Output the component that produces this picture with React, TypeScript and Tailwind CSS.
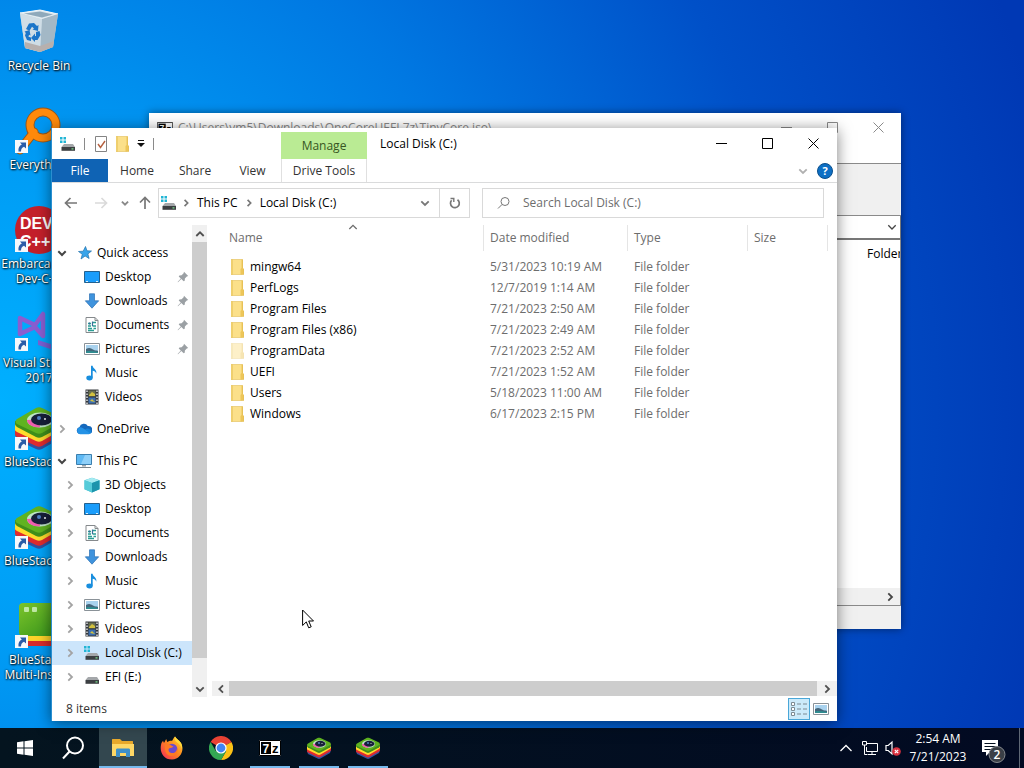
import type { ReactNode } from 'react';

type IconName =
  | 'star' | 'desktop' | 'download' | 'document' | 'picture' | 'music' | 'video'
  | 'cloud' | 'pc' | 'cube' | 'disk' | 'drive';

interface TreeItem {
  label: string;
  icon: IconName;
  level: 0 | 1;
  state?: 'open' | 'closed';
  pinned?: boolean;
  selected?: boolean;
}

const treeGroups: TreeItem[][] = [
  [
    { label: 'Quick access', icon: 'star', level: 0, state: 'open' },
    { label: 'Desktop', icon: 'desktop', level: 1, pinned: true },
    { label: 'Downloads', icon: 'download', level: 1, pinned: true },
    { label: 'Documents', icon: 'document', level: 1, pinned: true },
    { label: 'Pictures', icon: 'picture', level: 1, pinned: true },
    { label: 'Music', icon: 'music', level: 1 },
    { label: 'Videos', icon: 'video', level: 1 },
  ],
  [{ label: 'OneDrive', icon: 'cloud', level: 0, state: 'closed' }],
  [
    { label: 'This PC', icon: 'pc', level: 0, state: 'open' },
    { label: '3D Objects', icon: 'cube', level: 1, state: 'closed' },
    { label: 'Desktop', icon: 'desktop', level: 1, state: 'closed' },
    { label: 'Documents', icon: 'document', level: 1, state: 'closed' },
    { label: 'Downloads', icon: 'download', level: 1, state: 'closed' },
    { label: 'Music', icon: 'music', level: 1, state: 'closed' },
    { label: 'Pictures', icon: 'picture', level: 1, state: 'closed' },
    { label: 'Videos', icon: 'video', level: 1, state: 'closed' },
    { label: 'Local Disk (C:)', icon: 'disk', level: 1, state: 'closed', selected: true },
    { label: 'EFI (E:)', icon: 'drive', level: 1, state: 'closed' },
  ],
];

const files = [
  { name: 'mingw64', date: '5/31/2023 10:19 AM' },
  { name: 'PerfLogs', date: '12/7/2019 1:14 AM' },
  { name: 'Program Files', date: '7/21/2023 2:50 AM' },
  { name: 'Program Files (x86)', date: '7/21/2023 2:49 AM' },
  { name: 'ProgramData', date: '7/21/2023 2:52 AM', hidden: true },
  { name: 'UEFI', date: '7/21/2023 1:52 AM' },
  { name: 'Users', date: '5/18/2023 11:00 AM' },
  { name: 'Windows', date: '6/17/2023 2:15 PM' },
];

interface ChevronProps {
  dir: 'up' | 'down' | 'left' | 'right';
  size?: string;
  stroke?: number;
  className?: string;
}

function Chevron({ dir, size = 'size-3', stroke = 1.8, className = '' }: ChevronProps) {
  const paths = {
    up: 'M2.300 8L6 4.300 9.700 8',
    down: 'M2.300 4.300L6 8l3.700-3.700',
    left: 'M8 2.300L4.300 6 8 9.700',
    right: 'M4.300 2.300L8 6 4.300 9.700',
  };
  return (
    <svg viewBox="0 0 12 12" className={`${size} shrink-0 ${className}`} fill="none" stroke="currentColor" strokeWidth={stroke}>
      <path d={paths[dir]} />
    </svg>
  );
}

function FolderIcon({ faded }: { faded?: boolean }) {
  return (
    <svg viewBox="0 0 16 16" className={`size-4 shrink-0 ${faded ? 'opacity-45' : ''}`}>
      <path d="M1 .5h11v15H1z" fill="#fbe08a" />
      <path d="M1 .5h2v15H1z" fill="#efcf6e" />
      <path d="M11.500 .5H13v8.500l1 1v5.500h-3.500V10l1-1z" fill="#edc659" />
      <path d="M1 .5h11.500V9M1 15.500h12.500V10" fill="none" stroke="#e2bd55" strokeWidth=".6" />
    </svg>
  );
}

function DriveShape() {
  return (
    <>
      <path d="M4 8h9l2 3H1.500z" fill="#a4a7aa" />
      <path d="M1.500 11H15v3.800H1.500z" fill="#3c3f42" />
      <path d="M11.500 12.300h2v1.200h-2z" fill="#7be08e" />
    </>
  );
}

function SmallIcon({ name }: { name: IconName }) {
  const shapes: Record<IconName, ReactNode> = {
    star: (
      <path d="M9.500 1.500l1.500 4.300 4.500.2-3.600 2.900 1.200 4.600-4-2.500L5 14l1.300-4.700L2.500 6.500l4.700-.3z" fill="#38a4ea" stroke="#2273ad" strokeWidth=".7" />
    ),
    desktop: (
      <>
        <path d="M.5 2.500h15v11H.5z" fill="#1a9dfb" stroke="#24618f" />
        <path d="M2 12.500h2m8 0h2" stroke="#d7efff" />
      </>
    ),
    download: <path d="M5.500 .8h5v7h4.200L8 15.200 1.300 7.800h4.200z" fill="#3f93dd" stroke="#2b70b3" strokeWidth=".7" />,
    document: (
      <>
        <path d="M2 .5h9L14 3.500v12H2z" fill="#fff" stroke="#85898c" />
        <path d="M11 .5v3h3" fill="none" stroke="#85898c" />
        <path d="M4 6.500h3m2-1h3M4 9h3m1.500 0H12M4 11.500h4m1.500 0H12M4 13.500h6" stroke="#2a9d94" strokeWidth="1.300" />
        <path d="M8.500 4.500v4.500M5.500 5.500v2" stroke="#3c6f99" strokeWidth="1.200" />
      </>
    ),
    picture: (
      <>
        <path d="M.5 2.500h15v11H.5z" fill="#fff" stroke="#8a9298" />
        <path d="M2 4h12v8H2z" fill="#a9d2ee" />
        <path d="M2 8c3-2 5-1 7 .5s4 .5 5 1.500v2H2z" fill="#44657a" />
        <path d="M2 10.500c4-1 8 0 12 .5v1H2z" fill="#2f8d91" />
      </>
    ),
    music: (
      <>
        <ellipse cx="5.500" cy="13" rx="3.200" ry="2.400" fill="#188ede" />
        <path d="M7 .8h1.600c.3 3 4.800 3.800 3.600 8-.6-2.300-2-2.700-3.500-3v7H7z" fill="#188ede" />
      </>
    ),
    video: (
      <>
        <path d="M1.500 .5h13v15h-13z" fill="#33373b" />
        <path d="M4.500 1.500h7v6h-7z" fill="#6a7050" />
        <path d="M4.500 8.500h7v6h-7z" fill="#3c6fb0" />
        <path d="M5 6l3-3 3 2v2H5zM6 12l2-2 3 3" fill="#d2c13f" />
        <path d="M3 1.500v14M13 1.500v14" stroke="#e7e9ea" strokeWidth="1.400" strokeDasharray="1.500 1.500" />
      </>
    ),
    cloud: (
      <>
        <path d="M4 13a3.500 3.500 0 01-.5-6.900A4.500 4.500 0 0111.800 5 3.800 3.800 0 0113 13z" fill="#1669bd" />
        <path d="M4 13.300a3.600 3.600 0 010-7c2 0 3.500 1.200 5 2.200l5.500 3a2.800 2.800 0 01-1.500 1.800z" fill="#2492e6" />
        <path d="M9 8.500a4 4 0 016.500 2.500 2.500 2.500 0 01-1 1.500z" fill="#1784da" />
      </>
    ),
    pc: (
      <>
        <path d="M.5 1.500h15v10H.5z" fill="#5eb9f4" stroke="#3b7fae" />
        <path d="M9 2h6v9H5z" fill="#8fd0f9" />
        <path d="M6 12h4v1.500H6z" fill="#9aa3a9" />
        <path d="M1 14.500h14" stroke="#7c868c" />
      </>
    ),
    cube: (
      <>
        <path d="M8 .8l7.500 2.500v9L8 15.500.5 12.300v-9z" fill="#38bccd" />
        <path d="M8 .8l7.500 2.500L8 6 .5 3.300z" fill="#a5eaf1" />
        <path d="M8 6l7.500-2.700v9L8 15.500z" fill="#1d94ac" />
        <path d="M.5 3.300L8 6v9.500L.5 12.300z" fill="#55cbd9" />
      </>
    ),
    disk: (
      <>
        <DriveShape />
        <path d="M0 1h2.500v2.500H0zM3.500 1H6v2.500H3.500zM0 4.500h2.500V7H0zM3.500 4.500H6V7H3.500z" fill="#21b5d5" />
      </>
    ),
    drive: <DriveShape />,
  };
  return <svg viewBox="0 0 16 16" className="size-4 shrink-0">{shapes[name]}</svg>;
}

function PinIcon() {
  return (
    <svg viewBox="0 0 12 12" className="size-3 shrink-0">
      <path d="M7 .8L11.200 5l-1.400.5-1.900 2-.2 2.200-1 .6L4.300 8 1 11.300l-.4-.4L3.800 7.500 1.700 5.400l.7-1 2.200-.2 2-2z" fill="#9ba0a4" />
    </svg>
  );
}

function BlueStacksIcon({ className }: { className: string }) {
  return (
    <svg viewBox="0 0 48 48" className={className}>
      <path d="M0 30l24-8 24 6-2 6-19 11c-2 1-4 1-6 0L2 36z" fill="#34519f" />
      <path d="M0 25l24-6 24 3v6c0 1-1 2-2 3L27 42c-2 1-4 1-6 0L2 33c-1-1-2-1-2-2z" fill="#e02b2e" />
      <path d="M0 20l24-6 24 3v6c0 1-1 2-2 3L27 37c-2 1-4 1-6 0L2 28c-1-1-2-1-2-2z" fill="#ffdc2d" />
      <path d="M0 17h48v3c0 1-1 2-2 3L27 33c-2 1-4 1-6 0L2 23c-1-1-2-2-2-3z" fill="#3f8f1b" />
      <path d="M2 15L21 4c2-1 4-1 6 0l19 9c2 1 2 3 0 5L27 29c-2 1-4 1-6 0L2 20c-2-1-2-4 0-5z" fill="#5fb321" />
      <ellipse cx="25" cy="16" rx="13" ry="7.500" fill="#bfe6c8" />
      <path d="M12 16c0 4 5 7.500 13 7.500l-1-8z" fill="#ef5fae" />
      <ellipse cx="26.500" cy="15.500" rx="10.500" ry="6" fill="#17203a" />
      <circle cx="24" cy="14" r="2" fill="#4e7fc4" />
      <circle cx="30" cy="15" r="1" fill="#fff" />
    </svg>
  );
}

function ShortcutBadge() {
  return (
    <svg viewBox="0 0 13 13" className="absolute bottom-0.5 left-0 size-[13px]">
      <path d="M0 0h13v13H0z" fill="#f6f8fb" />
      <path d="M5 2.500h6v6L9 6.800C7 7.500 6 9 6 11.500H3.500C3 8 4.500 5.500 6.800 4.500z" fill="#2a5ca8" />
    </svg>
  );
}

function RecycleBinIcon() {
  return (
    <svg viewBox="0 0 48 48" className="size-12">
      <path d="M5 5l20-3 18 4-5 33-13 5-15-4z" fill="#b8cbd8" />
      <path d="M5 5l20-3 18 4-16 5z" fill="#dce7ee" stroke="#eef5f9" strokeWidth="1" />
      <path d="M9 5.500l16-2 13 3-11 3z" fill="#8fa9bb" />
      <path d="M27 11l16-5-5 33-13 5z" fill="#a3b8c6" />
      <path d="M5 5l22 6-2 33-15-4z" fill="#cfdde6" />
      <path d="M10 34l15 4 14-5-1 6-13 5-15-4z" fill="#b7b0ae" />
      <g fill="#1b75c9">
        <path d="M11 21l3-5.500 5-.5 3 3 1.500-1-.5 6-5.500-1.500 1.500-1-2-1.800-2.500 4z" />
        <path d="M21 24l3.500-1 1 4-3 5h-2.500v2l-4-4 4-4.500v2.500h1z" />
        <path d="M9.500 23.500l5-1.500 1 5.500-1.500-.7-.5 2 2.500.7v3.500l-4-1-2-4.500.8-2.500z" />
      </g>
    </svg>
  );
}

function EverythingIcon() {
  return (
    <svg viewBox="0 0 48 48" className="size-12">
      <path d="M19 25L5 43" stroke="#97561a" strokeWidth="9" strokeLinecap="round" />
      <circle cx="28" cy="18" r="13" fill="none" stroke="#97561a" strokeWidth="9" />
      <path d="M19 25L5 43" stroke="#ff8a0c" strokeWidth="7" strokeLinecap="round" />
      <circle cx="28" cy="18" r="13" fill="none" stroke="#ff8a0c" strokeWidth="7" />
    </svg>
  );
}

function DevIcon() {
  return (
    <svg viewBox="0 0 48 48" className="size-12">
      <circle cx="24" cy="24" r="24" fill="#c4202b" />
      <text x="5" y="23" fill="#fff" fontFamily="Liberation Sans, sans-serif" fontWeight="700" fontSize="16">DEV</text>
      <text x="5" y="41" fill="#fff" fontFamily="Liberation Sans, sans-serif" fontWeight="700" fontSize="16">C++</text>
    </svg>
  );
}

function VisualStudioIcon() {
  return (
    <svg viewBox="0 0 48 48" className="size-12">
      <path d="M5 13l15 7 8-11v22l-8-9-15 7z" fill="none" stroke="#8a5ed0" strokeWidth="4.500" strokeLinejoin="round" />
      <path d="M23 35l25 8v5L23 40z" fill="#7b61d4" />
    </svg>
  );
}

function MultiInstanceIcon() {
  return (
    <svg viewBox="0 0 48 48" className="size-12">
      <defs>
        <linearGradient id="screen" x1="0" y1="0" x2="1" y2="1">
          <stop offset="0" stopColor="#7cc42a" />
          <stop offset="1" stopColor="#2f8f1a" />
        </linearGradient>
      </defs>
      <path d="M6 37h42v7H10z" fill="#d92c2c" />
      <path d="M5 32h43v7H8z" fill="#ffd42a" />
      <rect x="4" y="1" width="46" height="33" rx="4" fill="url(#screen)" />
      <rect x="9" y="5" width="5" height="5" rx="1" fill="#bfe8a4" />
      <rect x="17" y="5" width="5" height="5" rx="1" fill="#bfe8a4" />
    </svg>
  );
}

const shortcuts: { lines: string[]; icon: ReactNode; link?: boolean }[] = [
  { lines: ['Recycle Bin'], icon: <RecycleBinIcon /> },
  { lines: ['Everything'], icon: <EverythingIcon />, link: true },
  { lines: ['Embarcadero', 'Dev-C++'], icon: <DevIcon />, link: true },
  { lines: ['Visual Studio', '2017'], icon: <VisualStudioIcon />, link: true },
  { lines: ['BlueStacks 5'], icon: <BlueStacksIcon className="size-12" />, link: true },
  { lines: ['BlueStacks X'], icon: <BlueStacksIcon className="size-12" />, link: true },
  { lines: ['BlueStacks', 'Multi-Insta...'], icon: <MultiInstanceIcon />, link: true },
];

function DesktopIcons() {
  return (
    <div className="flex w-[78px] flex-col">
      {shortcuts.map((item) => (
        <button key={item.lines.join(' ')} className="flex h-[99px] flex-col items-center pt-2 text-white">
          <span className="relative mb-0.5 block">
            {item.icon}
            {item.link && <ShortcutBadge />}
          </span>
          {item.lines.map((line) => (
            <span key={line} className="whitespace-nowrap leading-[15px] [text-shadow:1px_1px_2px_#000,0_0_2px_#000]">
              {line}
            </span>
          ))}
        </button>
      ))}
    </div>
  );
}

function WindowButtons({ className }: { className: string }) {
  const shapes = [
    { label: 'Minimize', d: 'M0 5.500h11' },
    { label: 'Maximize', d: 'M.5 .5h10v10H.5z' },
    { label: 'Close', d: 'M.5 .5l10 10M10.500 .5l-10 10' },
  ];
  return (
    <div className={`flex ${className}`}>
      {shapes.map((shape) => (
        <button key={shape.label} aria-label={shape.label} className="flex w-[46px] items-center justify-center">
          <svg viewBox="0 0 11 11" className="size-[11px]" fill="none" stroke="currentColor">
            <path d={shape.d} />
          </svg>
        </button>
      ))}
    </div>
  );
}

function SevenZipMark({ className }: { className: string }) {
  return (
    <svg viewBox="0 0 22 16" className={className}>
      <path d="M0 0h22v16H0z" fill="#fff" />
      <path d="M.5 .5h21v15H.5z" fill="none" stroke="#000" />
      <path d="M2 2h10v12H2z" fill="#000" />
      <text x="3.500" y="12.500" fontSize="12" fontWeight="700" fill="#fff" fontFamily="Liberation Sans, sans-serif">7</text>
      <text x="13" y="13" fontSize="13" fontWeight="700" fill="#000" fontFamily="Liberation Sans, sans-serif">z</text>
    </svg>
  );
}

function ArchiveWindow() {
  return (
    <section className="absolute top-[113px] right-[123px] bottom-[99px] left-[149px] flex flex-col bg-white shadow-[0_0_8px_rgba(0,0,0,0.45)]">
      <div className="flex h-[50px] items-start justify-between text-[#8a8a8a]">
        <div className="flex h-[29px] items-center gap-[5px] pl-2">
          <SevenZipMark className="h-3.5 w-4" />
          <span>C:\Users\vm5\Downloads\OneCoreUEFI.7z\TinyCore.iso\</span>
        </div>
        <WindowButtons className="h-7" />
      </div>
      <div className="h-[53px] border-y border-[#8a8a8a] bg-[#f0f0f0]" />
      <div className="relative flex h-6 items-center border-r border-b-2 border-[#777]">
        <select aria-label="Path" className="h-full w-full appearance-none bg-white px-2">
          <option> </option>
        </select>
        <Chevron dir="down" stroke={1.3} className="pointer-events-none absolute right-0.5 text-[#444]" />
      </div>
      <div className="flex flex-1 justify-end border-r border-[#8a8a8a]">
        <span className="mt-1 h-5 w-[33px] overflow-hidden leading-5 text-black">Folders</span>
      </div>
      <div className="flex h-[17px] items-center justify-end border-r border-[#8a8a8a] bg-[#f0f0f0]">
        <button aria-label="Scroll right" className="px-1">
          <Chevron dir="right" className="text-[#444]" />
        </button>
      </div>
      <div className="h-6 border-t border-[#8a8a8a] bg-[#f0f0f0]" />
    </section>
  );
}

function TitleBar() {
  return (
    <div className="flex h-[31px] items-stretch">
      <div className="flex w-[229px] items-center pl-2">
        <SmallIcon name="disk" />
        <span className="mx-2 h-3 w-px bg-[#8a8a8a]" />
        <button aria-label="Properties">
          <svg viewBox="0 0 16 16" className="size-4" fill="none">
            <path d="M2.500 .5h11v15h-11z" fill="#fff" stroke="#848484" />
            <path d="M5 8l2.500 3.500L12 5" stroke="#b5603f" strokeWidth="1.400" />
          </svg>
        </button>
        <button aria-label="New folder" className="ml-1.5"><FolderIcon /></button>
        <button aria-label="Customize Quick Access Toolbar" className="mx-1.5">
          <svg viewBox="0 0 8 8" className="size-2">
            <path d="M1 0h6v1H1zM0 3h8L4 7z" fill="#111" />
          </svg>
        </button>
        <span className="ml-0.5 h-3 w-px bg-[#8a8a8a]" />
      </div>
      <button className="mt-1 w-[86px] bg-[#baeb94] text-[#375623]">Manage</button>
      <h1 className="flex flex-1 items-center pl-[13px] text-black">Local Disk (C:)</h1>
      <WindowButtons className="mr-px text-black" />
    </div>
  );
}

function Ribbon() {
  const tab = 'text-[#333]';
  return (
    <div className="flex h-6 border-b border-[#dadbdc]">
      <button className="w-14 bg-[#0f63b4] text-white">File</button>
      <button className={`w-[58px] ${tab}`}>Home</button>
      <button className={`w-[58px] ${tab}`}>Share</button>
      <button className={`w-[57px] ${tab}`}>View</button>
      <button className={`w-[86px] border-x border-[#e0e0e0] ${tab}`}>Drive Tools</button>
      <div className="ml-auto flex items-center gap-2 pr-1">
        <button aria-label="Expand the ribbon"><Chevron dir="down" className="text-[#b0b0b0]" /></button>
        <button aria-label="Help">
          <svg viewBox="0 0 16 16" className="size-4">
            <circle cx="8" cy="8" r="7.500" fill="#0d6fc4" stroke="#0b4f8c" />
            <text x="8" y="12" textAnchor="middle" fontSize="11" fontWeight="700" fill="#fff" fontFamily="Open Sans, sans-serif">?</text>
          </svg>
        </button>
      </div>
    </div>
  );
}

function NavArrow({ label, d, className }: { label: string; d: string; className: string }) {
  return (
    <button aria-label={label} className={className}>
      <svg viewBox="0 0 14 14" className="size-3.5" fill="none" stroke="currentColor" strokeWidth="1.700">
        <path d={d} />
      </svg>
    </button>
  );
}

function AddressBar() {
  return (
    <div className="flex h-[42px] items-start pt-[5px] pr-[13px]">
      <div className="flex h-[30px] w-[106px] items-center pl-3">
        <NavArrow label="Back" d="M13 7H1.500M6.500 2l-5 5 5 5" className="text-[#777]" />
        <NavArrow label="Forward" d="M1 7h11.500M7.500 2l5 5-5 5" className="ml-4 text-[#dadada]" />
        <button aria-label="Recent locations" className="ml-3">
          <Chevron dir="down" size="size-2.5" stroke={2.2} className="text-[#888]" />
        </button>
        <NavArrow label="Up" d="M7 13V1.500M2 6.500l5-5 5 5" className="ml-2 text-[#777]" />
      </div>
      <div className="flex h-[30px] w-[312px] items-center border border-[#d9d9d9] pl-0.5 text-black">
        <SmallIcon name="disk" />
        <Chevron dir="right" size="size-2.5" stroke={2} className="mx-1 text-[#777]" />
        <button className="ml-0.5">This PC</button>
        <Chevron dir="right" size="size-2.5" stroke={2} className="mx-1.5 text-[#777]" />
        <button>Local Disk (C:)</button>
        <button aria-label="Previous locations" className="ml-auto px-2">
          <Chevron dir="down" className="text-[#777]" />
        </button>
        <button aria-label="Refresh" className="flex h-full w-[30px] items-center justify-center border-l border-[#d9d9d9]">
          <svg viewBox="0 0 12 12" className="size-3" fill="none" stroke="#777" strokeWidth="1.700">
            <path d="M2.600 3.300A4.400 4.400 0 108.500 2.700" />
            <path d="M1.500 1.500h3.300v3.500" strokeWidth="1.400" />
          </svg>
        </button>
      </div>
      <label className="ml-3 flex h-[30px] flex-1 items-center border border-[#d9d9d9] pl-3.5">
        <svg viewBox="0 0 14 14" className="size-3.5" fill="none" stroke="#777">
          <circle cx="8" cy="5.500" r="4" />
          <path d="M5 8.500L1 12.500" />
        </svg>
        <input
          type="text"
          aria-label="Search Local Disk (C:)"
          placeholder="Search Local Disk (C:)"
          className="ml-3 min-w-0 flex-1 outline-none placeholder:text-[#6d6d6d]"
        />
      </label>
    </div>
  );
}

function NavigationTree() {
  return (
    <nav className="flex w-[140px] flex-col gap-2 overflow-hidden pt-4">
      {treeGroups.map((group) => (
        <ul key={group[0].label}>
          {group.map((item) => (
            <li key={item.label}>
              <button
                className={`flex h-6 w-full items-center pr-[3px] text-black ${item.level === 0 ? 'pl-1' : 'pl-3'} ${
                  item.selected ? 'bg-[#cce5fb]' : ''
                }`}
              >
                <span className="mr-2 w-3">
                  {item.state === 'open' && <Chevron dir="down" stroke={2} className="text-[#444]" />}
                  {item.state === 'closed' && <Chevron dir="right" className="text-[#a3a3a3]" />}
                </span>
                <SmallIcon name={item.icon} />
                <span className="ml-[5px] flex-1 whitespace-nowrap text-left">{item.label}</span>
                {item.pinned && <PinIcon />}
              </button>
            </li>
          ))}
        </ul>
      ))}
    </nav>
  );
}

function VerticalScroll() {
  return (
    <div className="flex w-[15px] flex-col bg-[#f0f0f0] text-[#505050]">
      <button aria-label="Scroll up" className="flex h-[17px] items-center justify-center"><Chevron dir="up" /></button>
      <div className="flex-1">
        <div className="h-[95%] bg-[#cdcdcd]" />
      </div>
      <button aria-label="Scroll down" className="flex h-[17px] items-center justify-center"><Chevron dir="down" /></button>
    </div>
  );
}

function HeaderCell({ children, className = '' }: { children: ReactNode; className?: string }) {
  return (
    <th className={`relative p-0 pb-[5px] text-left font-normal ${className}`}>
      <div className="flex h-[26px] items-center border-r border-[#e5e5e5] pl-1.5">{children}</div>
    </th>
  );
}

function FileList() {
  return (
    <div className="flex min-w-0 flex-1 flex-col pl-px">
      <div className="flex-1">
        <table className="w-[620px] table-fixed border-collapse text-[#6d6d6d]">
          <thead>
            <tr>
              <HeaderCell className="w-[276px]">
                <span className="pl-[15px]">Name</span>
                <Chevron dir="up" stroke={1.3} className="absolute -top-1 left-[139px]" />
              </HeaderCell>
              <HeaderCell className="w-36">Date modified</HeaderCell>
              <HeaderCell className="w-[120px]">Type</HeaderCell>
              <HeaderCell>Size</HeaderCell>
            </tr>
          </thead>
          <tbody>
            {files.map((file) => (
              <tr key={file.name} className="h-[21px]">
                <td className="p-0 pl-[22px]">
                  <div className="flex items-center gap-1 text-black">
                    <FolderIcon faded={file.hidden} />
                    {file.name}
                  </div>
                </td>
                <td className="p-0 pl-1.5">{file.date}</td>
                <td className="p-0 pl-1.5">File folder</td>
                <td className="p-0" />
              </tr>
            ))}
          </tbody>
        </table>
      </div>
      <div className="mb-px ml-1 flex h-[15px] items-stretch bg-[#f0f0f0] text-[#505050]">
        <button aria-label="Scroll left" className="flex w-[17px] items-center justify-center"><Chevron dir="left" /></button>
        <div className="flex-1 bg-[#cdcdcd]" />
        <button aria-label="Scroll right" className="flex w-5 items-center justify-center"><Chevron dir="right" /></button>
      </div>
    </div>
  );
}

function StatusBar() {
  return (
    <footer className="flex h-6 items-center pl-3.5 pr-2 text-[#333]">
      <span>8 items</span>
      <button aria-label="Details view" className="ml-auto flex h-[22px] w-[22px] items-center justify-center border border-[#4aa7d8] bg-[#cceafa]">
        <svg viewBox="0 0 16 14" className="h-3.5 w-4" fill="none" stroke="#7c8a93">
          <path d="M.5 .5h3v3h-3zM.5 5.500h3v3h-3zM.5 10.500h3v3h-3z" fill="#fff" />
          <path d="M6 2h4m2 0h4M6 7h4m2 0h4M6 12h4m2 0h4" />
        </svg>
      </button>
      <button aria-label="Large icons view" className="ml-[3px]"><SmallIcon name="picture" /></button>
    </footer>
  );
}

function ExplorerWindow() {
  return (
    <section className="absolute top-32 right-[187px] bottom-[7px] left-[51px] flex flex-col border-l border-[#2b8fd0] bg-white shadow-[0_2px_14px_rgba(0,0,0,0.5)]">
      <TitleBar />
      <Ribbon />
      <AddressBar />
      <div className="flex min-h-0 flex-1">
        <NavigationTree />
        <VerticalScroll />
        <FileList />
      </div>
      <StatusBar />
    </section>
  );
}

function FirefoxIcon() {
  return (
    <svg viewBox="0 0 24 24" className="size-6">
      <defs>
        <linearGradient id="fox" x1="1" y1="0" x2="0" y2="1">
          <stop offset="0" stopColor="#ffe03a" />
          <stop offset=".45" stopColor="#ff8a1e" />
          <stop offset="1" stopColor="#f5255c" />
        </linearGradient>
      </defs>
      <path d="M15 .5c1 2 4 3.500 6 6.500 4 7-.5 16.500-9 16.500S-.5 16 1 9c.4-2 1-3 2-4.200L4 7l2.200-4 1 3c2-1 3-1.500 5-1.200C13 3.500 13.500 2 15 .5z" fill="url(#fox)" />
      <circle cx="12" cy="13" r="5.300" fill="#6b4bd0" />
      <path d="M5 9c2-1 4-.8 6 .2 1 .6 1.500 1 2.500 1-1 1.600-3 1.400-4.500 2.200-1.300 2 .5 4.500 3 4.600 3 .2 5-2 5-5 1.500 4-1 8-5.500 8S4 15.500 5 9z" fill="#ff7a24" />
      <path d="M15 .5c1 2 4 3.500 6 6.500 1 2 1.300 4 1 6-1-3-2.500-5-5-6.500-2-1.500-2.800-3.500-2-6z" fill="#ffdc3c" />
    </svg>
  );
}

function ChromeIcon() {
  return (
    <svg viewBox="0 0 24 24" className="size-6">
      <path d="M12 12L1.600 6A12 12 0 0122.400 6z" fill="#ea4335" />
      <path d="M12 12l10.400-6A12 12 0 0112 24l5.200-9z" fill="#fbc116" />
      <path d="M12 12l5.200 3L12 24A12 12 0 011.600 6l5.200 9z" fill="#34a853" />
      <path d="M12 6.500h10.600L22.400 6 12 5z" fill="#ea4335" />
      <circle cx="12" cy="12" r="5.600" fill="#fff" />
      <circle cx="12" cy="12" r="4.400" fill="#4285f4" />
    </svg>
  );
}

function ExplorerIcon() {
  return (
    <svg viewBox="0 0 24 24" className="size-6">
      <path d="M1 4c0-1 0-1 1-1h7l2 2h10c1 0 1 0 1 1v14H1z" fill="#e8a92c" />
      <path d="M1 8h22v12H1z" fill="#fed765" />
      <path d="M5 21v-7c0-1 .5-1.500 1.500-1.500h11c1 0 1.500.5 1.500 1.500v7h-4v-4H9v4z" fill="#3e8fc9" />
    </svg>
  );
}

const taskbarItems: { label: string; icon: ReactNode; state?: 'active' | 'running' }[] = [
  {
    label: 'Start',
    icon: (
      <svg viewBox="0 0 16 16" className="size-4" fill="#fff">
        <path d="M0 2.200l6.500-.9v6.200H0zM7.500 1.200L16 0v7.500H7.500zM0 8.500h6.500v6.200L0 13.800zM7.500 8.500H16V16l-8.500-1.200z" />
      </svg>
    ),
  },
  {
    label: 'Search',
    icon: (
      <svg viewBox="0 0 24 24" className="size-6" fill="none" stroke="#fff" strokeWidth="2">
        <circle cx="13" cy="9.500" r="8" />
        <path d="M7.500 15.500L1 22.500" />
      </svg>
    ),
  },
  { label: 'File Explorer', icon: <ExplorerIcon />, state: 'active' },
  { label: 'Firefox', icon: <FirefoxIcon /> },
  { label: 'Google Chrome', icon: <ChromeIcon /> },
  { label: '7-Zip', icon: <SevenZipMark className="h-4 w-[22px]" />, state: 'running' },
  { label: 'BlueStacks', icon: <BlueStacksIcon className="size-6" />, state: 'running' },
  { label: 'BlueStacks X', icon: <BlueStacksIcon className="size-6" />, state: 'running' },
];

function Taskbar() {
  return (
    <footer className="flex h-10 items-stretch bg-linear-to-r from-[#04141f] to-[#020a22] text-white">
      <div className="flex gap-px pl-px">
        {taskbarItems.map((item) => (
          <button
            key={item.label}
            aria-label={item.label}
            className={`flex w-12 flex-col items-center ${item.state === 'active' ? 'bg-[#33474f]' : ''}`}
          >
            <span className="flex flex-1 items-center">{item.icon}</span>
            {item.state === 'active' && <span className="-mt-0.5 h-0.5 w-full bg-[#76b9ed]" />}
            {item.state === 'running' && <span className="-mt-0.5 h-0.5 w-10 bg-[#76b9ed]" />}
          </button>
        ))}
      </div>
      <div className="ml-auto flex items-center">
        <button aria-label="Show hidden icons">
          <svg viewBox="0 0 14 14" className="size-3.5" fill="none" stroke="#fff" strokeWidth="1.300">
            <path d="M1.500 10L7 4.500l5.500 5.500" />
          </svg>
        </button>
        <button aria-label="Network" className="ml-2">
          <svg viewBox="0 0 18 16" className="h-4 w-[18px]" fill="none" stroke="#fff">
            <path d="M6 3.500h10.500v8h-11V7M11 11.500v3M7 14.500h8M1.500 1.500h4v3.500h-4zM3.500 5v9.500h3" />
          </svg>
        </button>
        <button aria-label="Volume" className="ml-1.5">
          <svg viewBox="0 0 16 16" className="size-4" fill="none" stroke="#fff" strokeWidth="1.200">
            <path d="M1 5.500h2.200L7 2v12L3.200 10.500H1z" />
            <circle cx="11.500" cy="11.500" r="4.300" fill="#d9303e" stroke="none" />
            <path d="M9.800 9.800l3.400 3.400M13.200 9.800l-3.400 3.400" />
          </svg>
        </button>
        <div className="ml-1.5 flex w-[62px] flex-col items-center whitespace-nowrap leading-[18px]">
          <time>2:54 AM</time>
          <time>7/21/2023</time>
        </div>
        <button aria-label="Notifications" className="ml-3">
          <svg viewBox="0 0 26 32" className="h-8 w-[26px]">
            <path d="M1 8h16v12H9l-4 4v-4H1z" fill="#fff" />
            <path d="M3.500 11.500h11M3.500 14.500h11M3.500 17.500h7" stroke="#04101f" strokeWidth="1.200" />
            <circle cx="16" cy="22.500" r="8" fill="#3a3f46" stroke="#85898e" />
            <text x="16" y="27" textAnchor="middle" fontSize="12" fontWeight="600" fill="#fff" fontFamily="Open Sans, sans-serif">2</text>
          </svg>
        </button>
        <span className="mr-1 ml-3 h-10 w-px bg-[#5f6875]" />
      </div>
    </footer>
  );
}

export default function App() {
  return (
    <div className="flex h-screen flex-col overflow-hidden font-['Open_Sans','Noto_Sans',sans-serif] text-xs">
      <main className="relative min-h-0 flex-1 bg-[radial-gradient(ellipse_105%_150%_at_0%_55%,#00b0ff_0%,#009cf5_22%,#0078e2_48%,#0050c8_74%,#0038b4_100%)]">
        <DesktopIcons />
        <ArchiveWindow />
        <ExplorerWindow />
        <svg viewBox="0 0 12 20" className="pointer-events-none absolute top-[609px] left-[302px] h-5 w-3">
          <path d="M.6 1v15.500l3.700-3.600 2.400 5.900 2.500-1-2.500-5.800h4.800z" fill="#fff" stroke="#000" strokeWidth="1" />
        </svg>
      </main>
      <Taskbar />
    </div>
  );
}
